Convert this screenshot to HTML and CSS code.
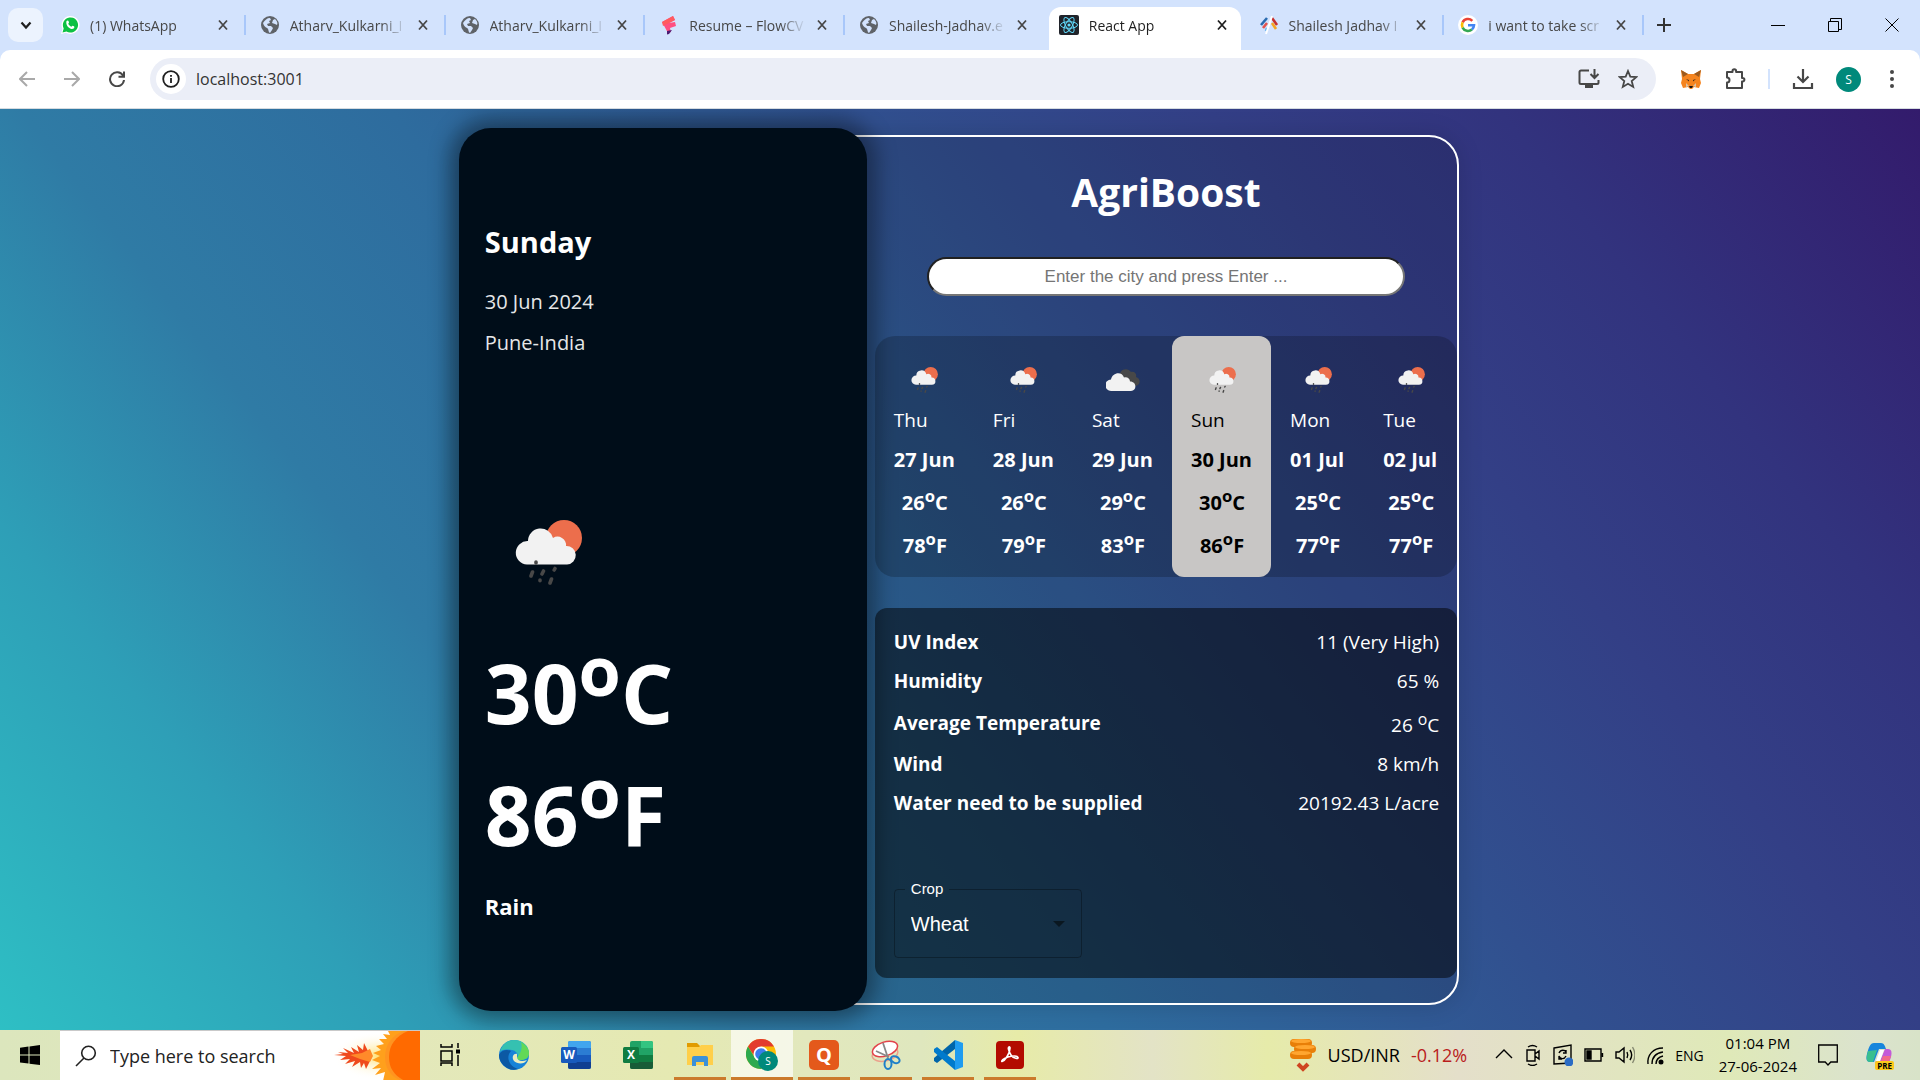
FILE: index.html
```html
<!DOCTYPE html>
<html lang="en">
<head>
<meta charset="utf-8">
<meta name="viewport" content="width=device-width, initial-scale=1">
<title>React App</title>
<link rel="stylesheet" href="styles.css">
</head>
<body>
<svg class="defs" aria-hidden="true">
  <symbol id="globe" viewBox="0 0 20 20"><circle cx="10" cy="10" r="9" fill="#5f6368"/><path d="M3 8c2-3 4-5 7-5l1 2-2 1 1 2-3 1 1 2h3l2 2-1 2-2 3c-2-1-1-4-3-5S4 11 3 8zM13 5l2-1c2 2 3 4 2 6l-2-1-3-1z" fill="#d3e3fd"/></symbol>
  <symbol id="close" viewBox="0 0 12 12"><path d="M2 1.500l8 9M10 1.500l-8 9" stroke="currentColor" stroke-width="1.800" fill="none"/></symbol>
  <symbol id="rain" viewBox="0 0 67 65">
    <circle cx="49" cy="18" r="18" fill="#ec6e4c"/>
    <path d="M12 44.500a11.700 11.700 0 0 1 1-23.400A12.700 12.700 0 0 1 38 18a8.500 8.500 0 0 1 13 8 9.200 9.200 0 0 1 1 18.500z" fill="#f2f2f2"/>
    <path d="M21 42v1M17.500 52l-1.500 4M28.500 51l-1.500 3M40 48.500l-.8 1.500M25 60v.8M36.500 59l-1.500 4" stroke="#484848" stroke-width="3.600" stroke-linecap="round"/>
  </symbol>
  <symbol id="cloudy" viewBox="0 0 34 22">
    <path d="M14 7a6 6 0 0 1 11-4c4-1 6 3 5 5 5 1 5 9-1 9H18z" fill="#484848"/>
    <path d="M5 22a5.500 5.500 0 0 1 0-11.500c1-7 11-9 13-2 3-1 6 1 6 4 7 0 7 9.500 1 9.500z" fill="#f2f2f2"/>
  </symbol>
</svg>

<header class="browser">
  <div class="tabstrip">
    <button class="tab-search" aria-label="Search tabs"><svg width="12" height="12" viewBox="0 0 12 12"><path d="M1.500 3.500L6 8.500l4.500-5" fill="none" stroke="#1f1f1f" stroke-width="2.200"/></svg></button>
    <nav class="tabs">
      <div class="tab"><svg class="favicon" viewBox="0 0 20 20"><path d="M1 19l1.500-5A9 9 0 1 1 6 17.700z" fill="#fff"/><path d="M2.500 17.500l1.200-4A7.600 7.600 0 1 1 6.500 16.500z" fill="#0dc143"/><path d="M6.500 6c1-1 2-.5 2.200.5l.3 1.200-.8 1c.8 1.500 1.800 2.300 3.200 3l1-1c1.500.4 2 .8 2 1.300 0 1.500-1.600 2.200-3 1.900C8 13 5.500 9.500 6.500 6z" fill="#fff"/></svg><a class="title" href="#">(1) WhatsApp</a><button aria-label="Close"><svg><use href="#close"/></svg></button></div>
      <div class="tab"><svg class="favicon"><use href="#globe"/></svg><a class="title" href="#">Atharv_Kulkarni_I</a><button aria-label="Close"><svg><use href="#close"/></svg></button></div>
      <div class="tab"><svg class="favicon"><use href="#globe"/></svg><a class="title" href="#">Atharv_Kulkarni_I</a><button aria-label="Close"><svg><use href="#close"/></svg></button></div>
      <div class="tab"><svg class="favicon" viewBox="0 0 20 20"><path d="M3 7l11-6 2 4-6 3 6-1 1 4-6 2 1 4-3 1z" fill="#ff4f81"/><path d="M3 7l11-6 2 4-12 6z" fill="#ff5a5f"/><path d="M8 16l5-1-3 4-2 .5z" fill="#4b1a72"/></svg><a class="title" href="#">Resume – FlowCV</a><button aria-label="Close"><svg><use href="#close"/></svg></button></div>
      <div class="tab before-active"><svg class="favicon"><use href="#globe"/></svg><a class="title" href="#">Shailesh-Jadhav.e</a><button aria-label="Close"><svg><use href="#close"/></svg></button></div>
      <div class="tab active"><svg class="favicon" viewBox="0 0 20 20"><rect width="20" height="20" rx="2" fill="#20232a"/><g fill="none" stroke="#61dafb"><ellipse cx="10" cy="10" rx="8.500" ry="3.300"/><ellipse cx="10" cy="10" rx="8.500" ry="3.300" transform="rotate(60 10 10)"/><ellipse cx="10" cy="10" rx="8.500" ry="3.300" transform="rotate(120 10 10)"/></g><circle cx="10" cy="10" r="1.600" fill="#61dafb"/></svg><a class="title" href="#">React App</a><button aria-label="Close"><svg><use href="#close"/></svg></button></div>
      <div class="tab"><svg class="favicon" viewBox="0 0 20 20"><g stroke-width="2.600" fill="none"><path d="M8 3L2 10" stroke="#2b6cb0"/><path d="M8 8l-4 5" stroke="#e2554f"/><path d="M13 3l5 7" stroke="#c53030"/><path d="M13 8l4 6" stroke="#f6a623"/><path d="M8 13l-1 3" stroke="#63b3ed"/></g><path d="M13 1L7 19" stroke="#fff" stroke-width="2"/></svg><a class="title" href="#">Shailesh Jadhav I</a><button aria-label="Close"><svg><use href="#close"/></svg></button></div>
      <div class="tab"><svg class="favicon" viewBox="0 0 20 20"><circle cx="10" cy="10" r="10" fill="#fff"/><g fill="none" stroke-width="2.600"><path d="M14.300 5.800A6 6 0 0 0 4.600 7.400" stroke="#ea4335"/><path d="M4.600 7.400a6 6 0 0 0 0 5.200" stroke="#fbbc05"/><path d="M4.600 12.600a6 6 0 0 0 9.300 1.900" stroke="#34a853"/><path d="M13.900 14.500A6 6 0 0 0 16 10.200h-6" stroke="#4285f4"/></g></svg><a class="title" href="#">i want to take scr</a><button aria-label="Close"><svg><use href="#close"/></svg></button></div>
    </nav>
    <button class="new-tab" aria-label="New tab"><svg width="14" height="14" viewBox="0 0 14 14"><path d="M7 0v14M0 7h14" stroke="#333" stroke-width="2"/></svg></button>
    <div class="window-buttons">
      <button aria-label="Minimize"><svg width="14" height="14" viewBox="0 0 14 14"><path d="M0 7.500h14" stroke="#000"/></svg></button>
      <button aria-label="Restore"><svg width="14" height="14" viewBox="0 0 14 14"><path d="M.5 3.500h10v10H.5zM2.500 3.500v-3h11v11h-3" fill="none" stroke="#000"/></svg></button>
      <button aria-label="Close window"><svg width="14" height="14" viewBox="0 0 14 14"><path d="M.5.5l13 13M13.500.5l-13 13" stroke="#000"/></svg></button>
    </div>
  </div>
  <div class="toolbar">
    <div class="nav-buttons">
      <button class="dim" aria-label="Back"><svg viewBox="0 0 16 16"><path d="M16 8H1.500M8 1L1 8l7 7"/></svg></button>
      <button class="dim" aria-label="Forward"><svg viewBox="0 0 16 16"><path d="M0 8h14.500M8 1l7 7-7 7"/></svg></button>
      <button aria-label="Reload"><svg viewBox="0 0 16 16"><path d="M14 4.500A7 7 0 1 0 15 9M15 .5v5.200H9.500"/></svg></button>
    </div>
    <form class="omnibox">
      <span class="site-info"><svg width="18" height="18" viewBox="0 0 18 18"><circle cx="9" cy="9" r="7.800" fill="none" stroke="#1f1f1f" stroke-width="1.800"/><path d="M9 8v5M9 5v1.800" stroke="#1f1f1f" stroke-width="1.800"/></svg></span>
      <input type="text" aria-label="Address" value="localhost:3001">
      <button type="button" aria-label="Install"><svg width="22" height="20" viewBox="0 0 22 20"><path d="M11 1.500H3a1.500 1.500 0 0 0-1.500 1.500v10.500A1.500 1.500 0 0 0 3 15h16a1.500 1.500 0 0 0 1.500-1.500V11M16.500 0v8M12.500 5l4 4 4-4" fill="none" stroke="#474747" stroke-width="2"/><path d="M7 15h8v4H7z" fill="#474747"/></svg></button>
      <button type="button" aria-label="Bookmark"><svg width="20" height="20" viewBox="0 0 20 20"><path d="M10 2l2.300 5.600 6 .5-4.600 3.900 1.500 5.900L10 14.700l-5.200 3.200L6.300 12 1.700 8.100l6-.5z" fill="none" stroke="#474747" stroke-width="1.800"/></svg></button>
    </form>
    <div class="extensions">
      <button aria-label="Wallet"><svg width="22" height="20" viewBox="0 0 22 20"><path d="M1 1l7 4h6l7-4-1 9 1 4-2 5-5-1-2 2h-2l-2-2-5 1-2-5 1-4z" fill="#f5841f"/><path d="M1 1l7 4-5 3zM21 1l-7 4 5 3z" fill="#9c5a1e"/><path d="M6 10l3 1 0 1.500zM16 10l-3 1 0 1.500z" fill="#3d2b1f"/><path d="M6 14l3 3-3 1zM16 14l-3 3 3 1z" fill="#d9c4a9"/><path d="M9 17h4l-1 2h-2z" fill="#161616"/></svg></button>
      <button aria-label="Extensions"><svg width="22" height="22" viewBox="0 0 22 22"><path d="M3 4h5.500V3a1.800 1.800 0 0 1 3.600 0v1H18v6h.6a1.800 1.800 0 0 1 0 3.600H18V20H3v-5.500a2.500 2.500 0 0 0 0-5z" fill="none" stroke="#474747" stroke-width="2" stroke-linejoin="round"/></svg></button>
      <span class="divider"></span>
      <button aria-label="Downloads"><svg width="22" height="22" viewBox="0 0 22 22"><path d="M11 1v13M5.500 8.500L11 14l5.500-5.500M2 15v5h18v-5" fill="none" stroke="#474747" stroke-width="2.200"/></svg></button>
      <button class="avatar">S</button>
      <button class="menu" aria-label="Menu"><svg width="6" height="20" viewBox="0 0 6 20" fill="#474747"><circle cx="3" cy="3" r="2"/><circle cx="3" cy="10" r="2"/><circle cx="3" cy="17" r="2"/></svg></button>
    </div>
  </div>
</header>

<main class="page">
  <div class="frame">
    <section class="today">
      <h2>Sunday</h2>
      <p>30 Jun 2024</p>
      <p>Pune-India</p>
      <svg class="today-icon"><use href="#rain"/></svg>
      <div class="big-temp">30<sup>o</sup>C</div>
      <div class="big-temp">86<sup>o</sup>F</div>
      <h3>Rain</h3>
    </section>
    <section class="panel">
      <h1>AgriBoost</h1>
      <input class="city" type="text" aria-label="City" placeholder="Enter the city and press Enter ...">
      <ul class="forecast">
        <li><svg><use href="#rain"/></svg><span>Thu</span><b>27 Jun</b><b class="temp">26<sup>o</sup>C</b><b class="temp">78<sup>o</sup>F</b></li>
        <li><svg><use href="#rain"/></svg><span>Fri</span><b>28 Jun</b><b class="temp">26<sup>o</sup>C</b><b class="temp">79<sup>o</sup>F</b></li>
        <li><svg class="wide"><use href="#cloudy"/></svg><span>Sat</span><b>29 Jun</b><b class="temp">29<sup>o</sup>C</b><b class="temp">83<sup>o</sup>F</b></li>
        <li class="selected"><svg><use href="#rain"/></svg><span>Sun</span><b>30 Jun</b><b class="temp">30<sup>o</sup>C</b><b class="temp">86<sup>o</sup>F</b></li>
        <li><svg><use href="#rain"/></svg><span>Mon</span><b>01 Jul</b><b class="temp">25<sup>o</sup>C</b><b class="temp">77<sup>o</sup>F</b></li>
        <li><svg><use href="#rain"/></svg><span>Tue</span><b>02 Jul</b><b class="temp">25<sup>o</sup>C</b><b class="temp">77<sup>o</sup>F</b></li>
      </ul>
      <div class="details">
        <dl>
          <div><dt>UV Index</dt><dd>11 (Very High)</dd></div>
          <div><dt>Humidity</dt><dd>65 %</dd></div>
          <div><dt>Average Temperature</dt><dd>26 <sup>o</sup>C</dd></div>
          <div><dt>Wind</dt><dd>8 km/h</dd></div>
          <div><dt>Water need to be supplied</dt><dd>20192.43 L/acre</dd></div>
        </dl>
        <fieldset class="crop">
          <legend><label for="crop">Crop</label></legend>
          <div class="select-wrap">
            <select id="crop"><option>Wheat</option><option>Rice</option></select>
            <span class="arrow"></span>
          </div>
        </fieldset>
      </div>
    </section>
  </div>
</main>

<footer class="taskbar">
  <button class="start" aria-label="Start"><svg width="20" height="20" viewBox="0 0 20 20"><path d="M0 2.800L8.500 1.600v8H0zM9.500 1.400L20 0v9.600H9.500zM0 10.600h8.500v8L0 17.400zM9.500 10.600H20V20L9.500 18.700z"/></svg></button>
  <label class="search">
    <svg width="22" height="22" viewBox="0 0 22 22"><circle cx="13.500" cy="8" r="6.800" fill="none" stroke="#222" stroke-width="1.600"/><path d="M9 13L1 21" stroke="#222" stroke-width="1.600"/></svg>
    <input type="text" aria-label="Search" placeholder="Type here to search">
    <svg class="sunart" width="90" height="50" viewBox="0 0 90 50"><defs><radialGradient id="glow"><stop offset="0" stop-color="#ffe27a"/><stop offset="1" stop-color="#fff" stop-opacity="0"/></radialGradient></defs><ellipse cx="48" cy="25" rx="45" ry="24" fill="url(#glow)"/><path d="M4 24l9-1-5-2 10 1-5-5 11 5-3-6 8 5-2-7 6 5 1-7 5 10 3 3-2 5-4 8-2-6-3 5-1-6-8 5 3-6-10 3 5-5-10 1 6-4z" fill="#ef4a1d"/><path d="M20 24l12-2 8-4 3 7-3 6-10-3z" fill="#ff8a2a"/><path d="M90 0H58l2 4-7-1 4 5-8 0 5 5-8 2 5 4-8 3 7 3-8 4 8 3-8 6 9-1-6 7 10-3-2 9h42z" fill="#ffa01c"/><path d="M90 0H74C62 4 55 14 55 26s6 20 17 24h18z" fill="#ff9420"/><path d="M90 0H78C66 5 59 14 59 26s6 19 16 24h15z" fill="#ff6a00"/></svg>
  </label>
  <div class="apps">
    <button class="task-view" aria-label="Task view"><svg width="20" height="24" viewBox="0 0 20 24" fill="none" stroke="#000" stroke-width="1.500"><path d="M1 1v3h11V1M1 8h11v10H1zM1 23v-3h11v3M18 0v5M18 12v11"/><path d="M16 8.500h4" stroke-width="4"/></svg></button>
    <button aria-label="Edge"><svg width="30" height="30" viewBox="0 0 30 30"><circle cx="15" cy="15" r="15" fill="#1683d8"/><path d="M1 12C3 4 9 0 15 0c9 0 15 6 15 13 0 5-4 7-8 7-3 0-4-1-4-2 2-3 0-7-5-8S3 9 1 12z" fill="#35c1b1"/><path d="M22 2c5 3 8 7 8 11 0 5-4 7-8 7-3 0-4-1-4-2 3-4 6-9 4-16z" fill="#62d957"/><path d="M12 11c-5 5-3 15 7 18C9 32 0 24 0 15c2-5 8-6 12-4z" fill="#0c59a4"/><path d="M18 17c0 4 5 5 10 3-3 5-10 4-13 1-3-4 0-8 3-7z" fill="#e9edc0"/></svg></button>
    <button aria-label="Word"><svg width="30" height="30" viewBox="0 0 30 30"><rect x="7" y="1" width="23" height="28" rx="2" fill="#2b7cd3"/><path d="M7 3a2 2 0 0 1 2-2h19a2 2 0 0 1 2 2v5H7z" fill="#41a5ee"/><path d="M7 15h23v7H7z" fill="#185abd"/><path d="M7 22h23v5a2 2 0 0 1-2 2H9a2 2 0 0 1-2-2z" fill="#103f91"/><rect y="7" width="16" height="16" rx="1.500" fill="#185abd"/><text x="8" y="19" class="glyph">W</text></svg></button>
    <button aria-label="Excel"><svg width="30" height="30" viewBox="0 0 30 30"><rect x="7" y="1" width="23" height="28" rx="2" fill="#21a366"/><path d="M18 1h10a2 2 0 0 1 2 2v5H18z" fill="#33c481"/><path d="M7 15h23v7H7z" fill="#107c41"/><path d="M7 22h23v5a2 2 0 0 1-2 2H9a2 2 0 0 1-2-2z" fill="#185c37"/><rect y="7" width="16" height="16" rx="1.500" fill="#107c41"/><text x="8" y="19" class="glyph">X</text></svg></button>
    <button class="open" aria-label="File Explorer"><svg width="28" height="26" viewBox="0 0 28 26"><path d="M1 1h10l3 3v4H1z" fill="#e19b00"/><path d="M1 5h12l2-2h12v20H1z" fill="#ffcf4a"/><path d="M6 24v-8a2 2 0 0 1 2-2h12a2 2 0 0 1 2 2v8h-4v-4h-8v4z" fill="#3c91d8"/></svg></button>
    <button class="open current" aria-label="Chrome"><svg width="32" height="32" viewBox="0 0 32 32"><circle cx="15" cy="15" r="15" fill="#fbbc04"/><path d="M2 7.500a15 15 0 0 1 26 0H15L9 18z" fill="#e33b2e"/><path d="M2 7.500L9 19l10 3-4 8A15 15 0 0 1 2 7.500z" fill="#2da94f"/><circle cx="15" cy="15" r="7.500" fill="#fff"/><circle cx="15" cy="15" r="5.800" fill="#3b7ded"/><circle cx="22" cy="22" r="10" fill="#00897b"/><text x="22" y="26" class="glyph small">S</text></svg></button>
    <button class="open" aria-label="Q"><svg width="30" height="30" viewBox="0 0 30 30"><rect width="30" height="30" rx="5" fill="#e4591b"/><text x="15" y="22" class="glyph big">Q</text></svg></button>
    <button class="open" aria-label="Snipping Tool"><svg width="30" height="30" viewBox="0 0 30 30"><ellipse cx="14" cy="14" rx="13" ry="7" fill="none" stroke="#eba08c" stroke-width="1.500" transform="rotate(-12 14 14)"/><ellipse cx="14" cy="9" rx="13" ry="7" fill="#fff" stroke="#e2434b" stroke-width="1.500" transform="rotate(-18 14 9)"/><path d="M12 3l5 15M5 11l13 6" stroke="#888" stroke-width="1.800"/><ellipse cx="17" cy="24" rx="3.500" ry="5" fill="none" stroke="#1d7fc9" stroke-width="2"/><ellipse cx="24.500" cy="19.500" rx="4.500" ry="3.200" fill="none" stroke="#1d7fc9" stroke-width="2" transform="rotate(25 24 19)"/></svg></button>
    <button class="open" aria-label="VS Code"><svg width="30" height="30" viewBox="0 0 30 30"><path d="M22 0v9L4 23l-3-2v-3z" fill="#0065a9"/><path d="M22 30v-9L4 7 1 9v3z" fill="#007acc"/><path d="M22 0l8 3v24l-8 3z" fill="#1f9cf0"/></svg></button>
    <button class="open" aria-label="Acrobat"><svg width="28" height="28" viewBox="0 0 28 28"><rect width="28" height="28" rx="4" fill="#b30b00"/><path d="M6 20.500c3-1 8-8 8-13.500 0-2-2-1-1.500 1 1 5 4 9 8 9.500 3 0 1-2.500-2-2.500-4 0-9 1.500-12 4-.8.800-.8 1.500-.5 1.500z" fill="none" stroke="#fff" stroke-width="1.700"/></svg></button>
  </div>
  <div class="tray">
    <button class="ticker"><svg width="28" height="36" viewBox="0 0 28 36"><g fill="#e87f08"><rect x="1" y="14" width="22" height="8" rx="4"/><rect x="5" y="8" width="22" height="8" rx="4"/><rect x="1" y="2" width="22" height="8" rx="4"/></g><g fill="#ffa630"><ellipse cx="12" cy="16" rx="10" ry="2"/><ellipse cx="16" cy="10" rx="10" ry="2"/><ellipse cx="12" cy="4" rx="10" ry="2"/></g><path d="M9 27l5 5 5-5" fill="none" stroke="#cf4520" stroke-width="4"/></svg><span>USD/INR</span><span class="down">-0.12%</span></button>
    <div class="status">
      <svg width="18" height="22" viewBox="0 0 18 22"><path d="M1 14l8-8 8 8"/></svg>
      <svg width="18" height="22" viewBox="0 0 18 22"><path d="M3 6h8v11H3zM11 10l4-3v8l-4-3M4 3c3-2 6-2 9 0M4 20c3 2 6 2 9 0"/></svg>
      <svg width="20" height="22" viewBox="0 0 20 22"><path d="M1 4l17-3v18L1 20zM6 9c2-4 6-3 7-1M13 6v3h-3M13 12c-2 4-6 3-7 0v3h3"/><circle cx="16" cy="18" r="4.500" class="dot"/></svg>
      <svg width="20" height="22" viewBox="0 0 20 22"><path d="M1 5h16v12H1zM18.500 9v4"/><path d="M3 7h4v8H3z" fill="#000"/></svg>
      <svg width="20" height="22" viewBox="0 0 20 22"><path d="M1 8h3l5-4v14l-5-4H1zM12 8c1 2 1 4 0 6M15 6c2 3 2 7 0 10"/><path d="M17.500 3c3 5 3 11 0 16" opacity=".4"/></svg>
      <svg width="18" height="22" viewBox="0 0 18 22"><path d="M2 20C1 11 7 4 17 4M6 20c0-7 4-11 11-12M10 20c0-4 3-7 7-8"/><circle cx="15" cy="18" r="1.800" fill="#000"/></svg>
      <span>ENG</span>
    </div>
    <div class="clock"><time>01:04 PM</time><time>27-06-2024</time></div>
    <button aria-label="Notifications"><svg width="20" height="22" viewBox="0 0 20 22"><path d="M.7 1h18.600v17h-6.500L10 21l-2.800-3H.7z" fill="none" stroke="#000" stroke-width="1.300"/></svg></button>
    <button class="copilot" aria-label="Copilot"><svg width="26" height="26" viewBox="0 0 26 26"><path d="M8 1h7c3 0 4 3 5 6h-7L8 20H4c-4 0-4-4-3-8C3 5 4 1 8 1z" fill="#1685dc"/><path d="M2 9l9-1-4 12H4c-4 0-4-4-2-11z" fill="#39bf8f"/><path d="M19 7h3c4 0 4 4 3 8-2 6-3 9-7 9h-7c-3 0-2-3-1-5h4z" fill="#c35ad9"/><path d="M14 8h4l-4 11h-4z" fill="#fff"/><path d="M17 14h8l-3 8h-8z" fill="#f26a8a"/></svg><small>PRE</small></button>
  </div>
</footer>
</body>
</html>
```
FILE: styles.css
```css
* { box-sizing: border-box; }

body {
  margin: 0;
  min-height: 100vh;
  display: flex;
  flex-direction: column;
  font-family: "Open Sans", "Noto Sans", sans-serif;
  font-size: 19px;
  line-height: 27px;
}

button {
  display: flex;
  align-items: center;
  justify-content: center;
  padding: 0;
  border: 0;
  background: none;
  color: inherit;
  font: inherit;
}

h1, h2, h3, p, ul, dl, dd { margin: 0; padding: 0; }
svg { flex: none; }
.defs { display: none; }

/* Browser chrome */
.browser { background: #d3e3fd; }

.tabstrip {
  display: flex;
  align-items: center;
  height: 50px;
}

.tab-search {
  flex: none;
  width: 35px;
  height: 34px;
  margin: 0 3px 0 8px;
  border-radius: 10px;
  background: #ecf3fe;
}

.tabs {
  flex: 1;
  min-width: 0;
  align-self: stretch;
  display: flex;
}

.tab {
  flex: 1;
  min-width: 0;
  display: flex;
  align-items: center;
  gap: 10px;
  margin-top: 7px;
  padding: 0 0 7px 14px;
  color: #474747;
  font-size: 14px;
}

.tab::after {
  content: "";
  width: 2px;
  height: 20px;
  margin-left: 5px;
  background: #a8c7fa;
}

.before-active::after { visibility: hidden; }
.favicon { width: 20px; height: 20px; }

.title {
  flex: 1;
  min-width: 0;
  overflow: hidden;
  white-space: nowrap;
  color: inherit;
  text-decoration: none;
  mask-image: linear-gradient(to right, #000 78%, transparent);
}

.tab button svg { width: 12px; height: 12px; }

.active {
  position: relative;
  color: #1f1f1f;
}

.active::before {
  content: "";
  position: absolute;
  inset: 0 4px;
  border-radius: 12px 12px 0 0;
  background: #fff;
}

.active::after { visibility: hidden; }
.active > * { position: relative; }

.new-tab { flex: none; width: 40px; }

.window-buttons {
  flex: none;
  display: flex;
  margin-left: 65px;
}

.window-buttons button { width: 57px; }

.toolbar {
  display: flex;
  align-items: center;
  height: 59px;
  padding: 0 25px 0 19px;
  border-bottom: 1px solid #d5dbe0;
  border-radius: 10px 10px 0 0;
  background: #fff;
}

.nav-buttons { display: flex; gap: 29px; }

.nav-buttons svg {
  width: 16px;
  height: 16px;
  fill: none;
  stroke: #474747;
  stroke-width: 2;
}

.nav-buttons .dim svg { stroke: #a9a9a9; }

.omnibox {
  flex: 1;
  display: flex;
  align-items: center;
  gap: 18px;
  height: 42px;
  margin: 0 24px 0 25px;
  padding: 0 18px 0 6px;
  border-radius: 21px;
  background: #ebeef7;
}

.site-info {
  display: flex;
  align-items: center;
  justify-content: center;
  width: 30px;
  height: 30px;
  border-radius: 50%;
  background: #fff;
}

.omnibox input {
  flex: 1;
  padding: 0;
  margin-left: -8px;
  border: 0;
  background: none;
  color: #333;
  font: 16px "Open Sans", sans-serif;
}

.extensions { display: flex; align-items: center; gap: 22px; }
.divider { width: 2px; height: 20px; background: #d3e3fd; }
.menu { margin-left: 6px; }

.avatar {
  width: 25px;
  height: 25px;
  border-radius: 50%;
  background: #00897b;
  color: #fff;
  font-size: 12px;
}

/* Weather page */
.page {
  flex: 1;
  display: flex;
  justify-content: center;
  padding: 26px 0 25px;
  overflow: hidden;
  background: linear-gradient(52deg, #2ebfc4 0%, #2e9fb7 15%, #2f7ba5 28%, #2e6c9e 42%, #31508f 60%, #333f86 73%, #32337e 84%, #331b6c 100%);
  color: #fff;
}

.frame {
  width: 52%;
  min-width: 960px;
  display: grid;
  grid-template-columns: 404px 1fr;
  border: 2px solid #fff;
  border-radius: 30px;
  background: rgba(0, 0, 0, 0.12);
  box-shadow: 0 0 24px rgba(0, 0, 0, 0.15);
}

.today {
  margin: -9px 0 -8px -4px;
  padding: 94px 26px 0;
  border-radius: 32px;
  background: #000d19;
  box-shadow: 0 0 20px 10px rgba(0, 0, 0, 0.35);
}

.today h2 {
  margin-bottom: 26px;
  font-size: 29px;
  line-height: 40px;
}

.today p {
  margin-bottom: 14px;
  color: #e6e7e8;
  font-size: 20px;
}

.today-icon {
  display: block;
  width: 67px;
  height: 65px;
  margin: 164px 0 35px 30px;
}

.big-temp {
  font-size: 82px;
  font-weight: 700;
  line-height: 99px;
}

.today h3 {
  margin-top: 26px;
  font-size: 22px;
  line-height: 30px;
}

.panel {
  display: flex;
  flex-direction: column;
  padding: 28px 0 25px 8px;
}

h1 {
  margin-bottom: 38px;
  font-size: 39px;
  line-height: 54px;
  text-align: center;
}

.city {
  align-self: center;
  width: 82%;
  height: 39px;
  margin-bottom: 40px;
  border: 2px inset #767676;
  border-radius: 20px;
  background: #fff;
  font: 17px "Liberation Sans", Arial, sans-serif;
  text-align: center;
}

.forecast {
  display: grid;
  grid-template-columns: repeat(4, 99fr) repeat(2, 93fr);
  margin-bottom: 31px;
  border-radius: 20px;
  background: rgba(0, 0, 0, 0.2);
  list-style: none;
}

.forecast li {
  display: flex;
  flex-direction: column;
  gap: 9px;
  height: 241px;
  padding: 31px 18px 0 19px;
  white-space: nowrap;
}

.forecast svg {
  align-self: center;
  width: 27px;
  height: 26px;
  margin-bottom: 5px;
}

.forecast .wide { width: 34px; }
.forecast span { margin-bottom: 3px; }
.forecast b { font-size: 20px; }
.temp { text-align: center; }

.selected {
  border-radius: 12px;
  background: #c8c6c5;
  color: #000;
}

.details {
  flex: 1;
  display: flex;
  flex-direction: column;
  padding: 21px 18px 20px 19px;
  border-radius: 12px;
  background: rgba(0, 0, 0, 0.5);
}

dl { display: grid; gap: 12px; }

dl div {
  display: flex;
  align-items: center;
  justify-content: space-between;
}

dt { font-weight: 700; }
dd sup { line-height: 24px; }

.crop {
  width: 188px;
  margin: auto 0 0;
  padding: 0 16px 0 10px;
  border: 1px solid rgba(0, 0, 0, 0.3);
  border-radius: 4px;
  font-family: "Liberation Sans", Arial, sans-serif;
}

.crop legend {
  padding: 0 6px;
  font-size: 15px;
  line-height: 16px;
}

.select-wrap {
  display: flex;
  align-items: center;
  height: 60px;
  padding-bottom: 6px;
}

.crop select {
  flex: 1;
  padding: 0 6px;
  border: 0;
  appearance: none;
  background: none;
  color: #fff;
  font: 20px "Liberation Sans", Arial, sans-serif;
}

.arrow {
  border: 6px solid transparent;
  border-top-color: #0a1720;
  border-bottom: 0;
}

/* Taskbar */
.taskbar {
  display: flex;
  height: 50px;
  background: linear-gradient(90deg, #dce6bd, #e3e8bb 20%, #e5e9b2 35%, #e2e8bd 42%, #dfe7be 48%, #e7eba8 53%, #e3e3c6 60%, #e6ebaa 66%, #e4dfca 76%, #dfe9b8 90%, #dbe3cd 97%, #d8e3c8);
  color: #000;
}

.start { width: 60px; }

.search {
  display: flex;
  align-items: center;
  width: 360px;
  padding-left: 15px;
  border-top: 1px solid #c9c9c9;
  background: #fff;
}

.search input {
  flex: 1;
  min-width: 0;
  margin-left: 13px;
  padding: 0;
  border: 0;
  background: none;
  font: 18px "Open Sans", sans-serif;
}

.search input::placeholder { color: #222; }
.apps { display: flex; }
.apps button { width: 62px; position: relative; }
.apps .task-view { width: 60px; margin-right: 3px; }

.open::after {
  content: "";
  position: absolute;
  inset: auto 5px 0;
  height: 3px;
  background: #cb7a2c;
}

.current { background: rgba(255, 255, 255, 0.65); }
.current::after { inset: auto 0 0; }

.glyph {
  fill: #fff;
  font: 700 12px "Open Sans", sans-serif;
  text-anchor: middle;
}

.small { font-size: 10px; font-weight: 400; }
.big { font-size: 20px; }

.tray {
  display: flex;
  align-items: center;
  margin-left: auto;
  padding-right: 28px;
}

.ticker { gap: 11px; font-size: 18px; }
.down { color: #b91c1c; }

.status {
  display: flex;
  align-items: center;
  gap: 11px;
  margin-left: 28px;
  font-size: 14px;
}

.status svg { fill: none; stroke: #000; stroke-width: 1.4px; }
.status .dot { fill: #2b6cc4; stroke: none; }

.clock {
  display: flex;
  flex-direction: column;
  align-items: center;
  margin: 0 21px 0 15px;
  font-size: 15px;
  line-height: 23px;
}

.copilot { position: relative; margin-left: 28px; }

.copilot small {
  position: absolute;
  right: -2px;
  bottom: -2px;
  padding: 0 2px;
  border-radius: 2px;
  background: #fbc91b;
  font-size: 8px;
  font-weight: 700;
  line-height: 9px;
}
```
